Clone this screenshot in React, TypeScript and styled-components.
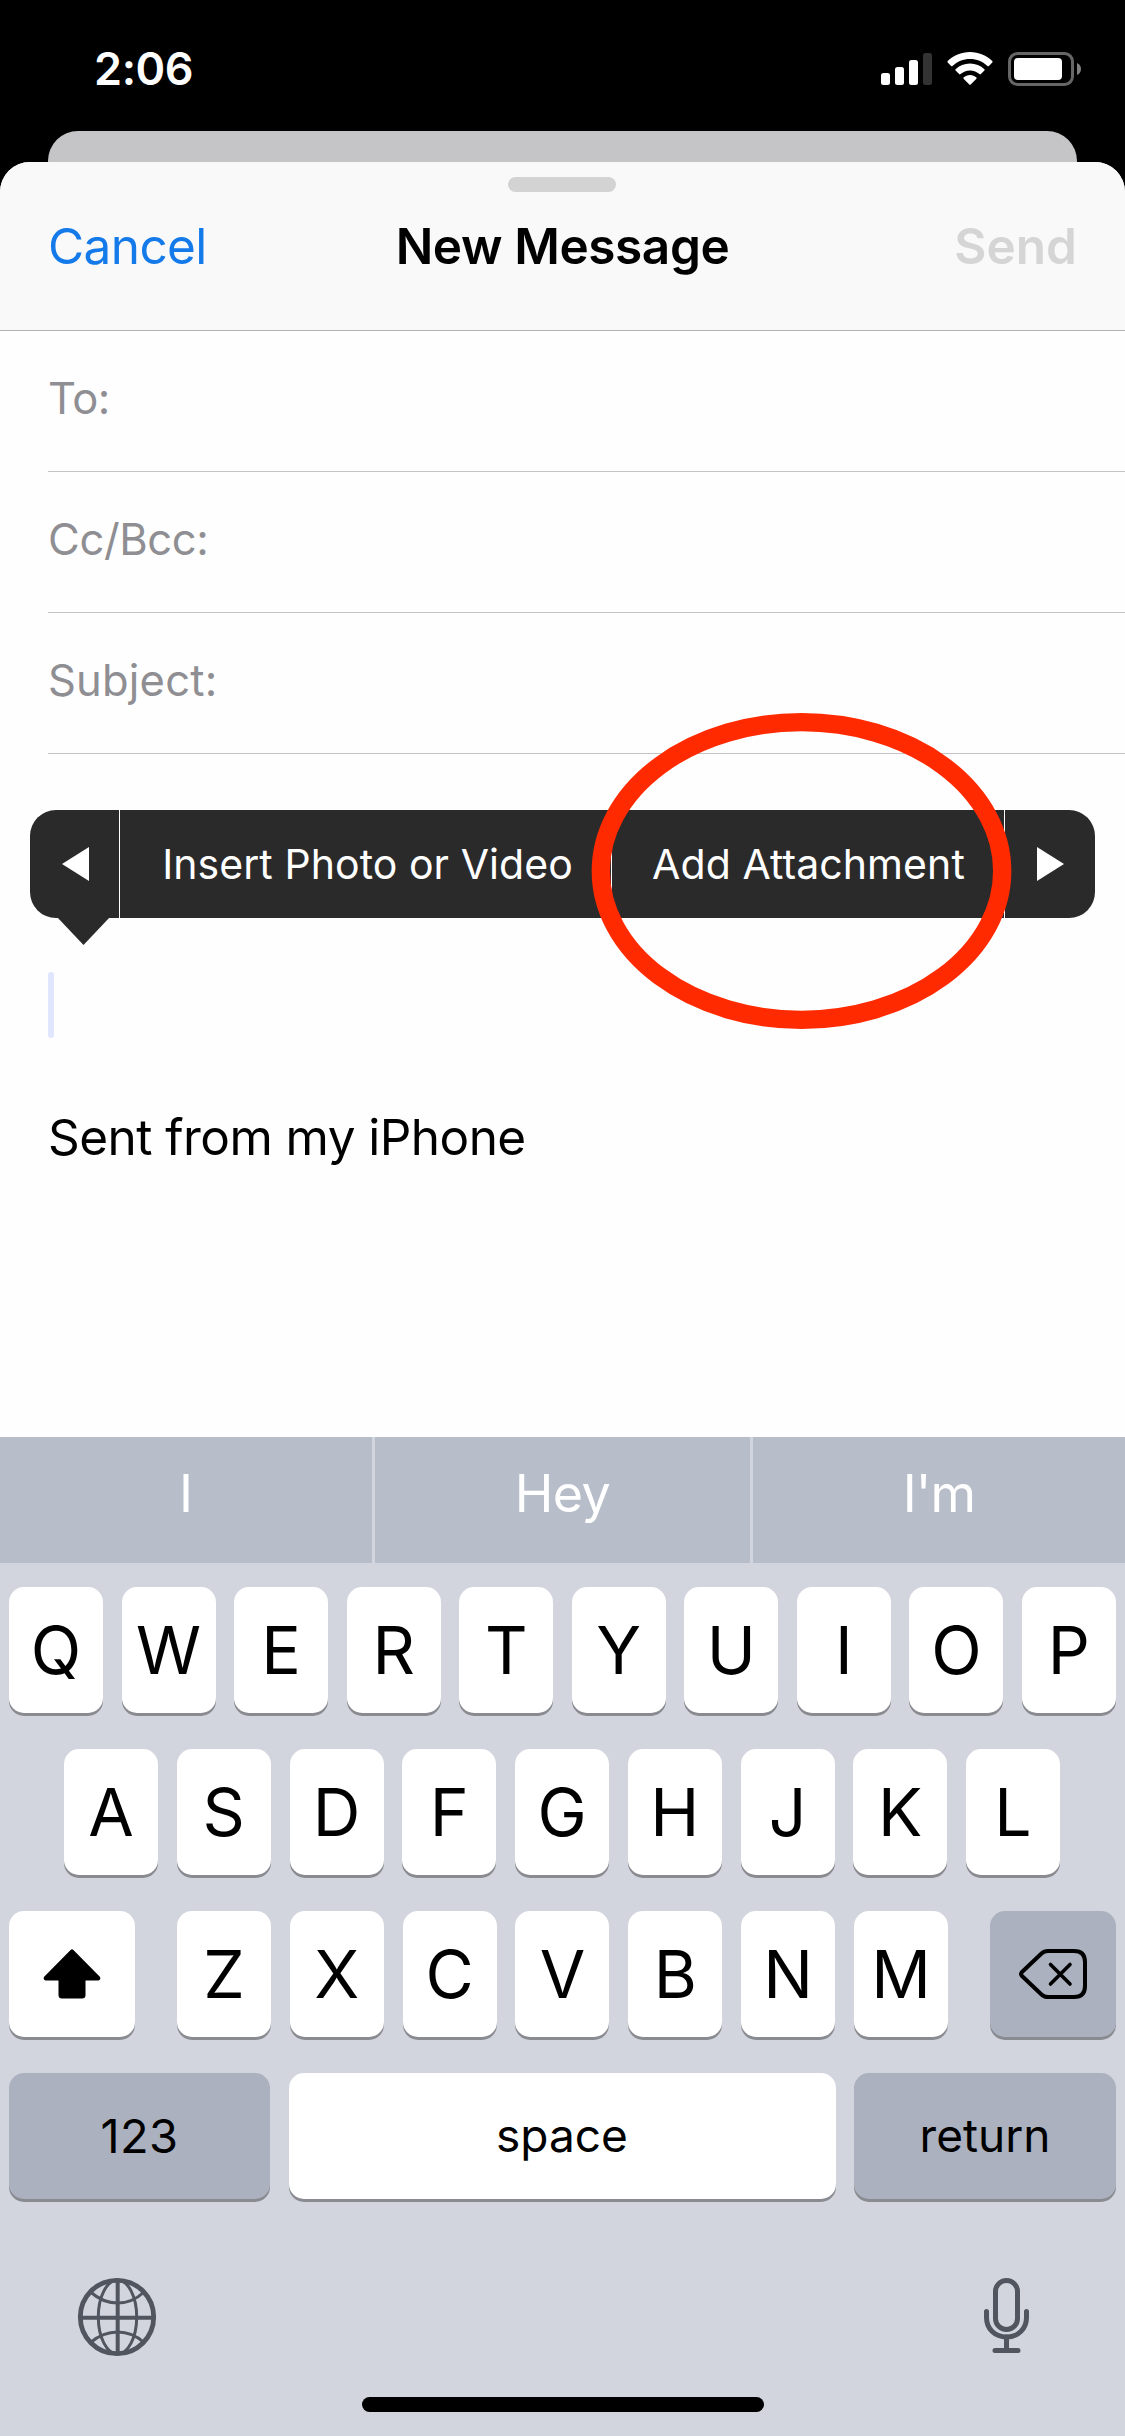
import React from "react";
import styled, { createGlobalStyle } from "styled-components";

const GlobalStyle = createGlobalStyle`
  * { box-sizing: border-box; }
  html, body { margin: 0; padding: 0; background: #000; }
  body { font-family: Inter, "Liberation Sans", sans-serif; }
`;

const Screen = styled.div`
  width: 1125px;
  height: 2436px;
  display: flex;
  flex-direction: column;
  overflow: hidden;
  background: #000;
`;

/* ---------- text ---------- */

const Label = styled.span<{ $size: number; $spacing?: number; $weight?: number; $color?: string }>`
  font-size: ${(p) => p.$size}px;
  letter-spacing: ${(p) => p.$spacing ?? 0}px;
  font-weight: ${(p) => p.$weight ?? 400};
  color: ${(p) => p.$color ?? "#000"};
  line-height: 60px;
  white-space: nowrap;
`;

/* ---------- status bar ---------- */

const StatusBar = styled.header`
  height: 131px;
  flex: none;
  display: flex;
  align-items: flex-start;
  justify-content: space-between;
  padding: 39px 43px 0 94px;
`;

const StatusIcons = styled.div`
  display: flex;
  align-items: flex-start;
  gap: 15px;
  padding-top: 13px;
`;

/* ---------- sheets ---------- */

const BackSheet = styled.div`
  height: 31px;
  flex: none;
  margin: 0 48px;
  border-radius: 30px 30px 0 0;
  background: #c5c5c7;
`;

const Sheet = styled.main`
  height: 1275px;
  flex: none;
  display: flex;
  flex-direction: column;
  border-radius: 30px 30px 0 0;
  background: #fefefe;
`;

const SheetHeader = styled.div`
  height: 169px;
  flex: none;
  display: flex;
  flex-direction: column;
  align-items: center;
  padding-top: 15px;
  border-radius: 30px 30px 0 0;
  border-bottom: 1px solid #b2b2b4;
  background: #f9f9f9;
`;

const Grabber = styled.div`
  width: 108px;
  height: 15px;
  margin-right: 1px;
  border-radius: 8px;
  background: #d3d3d3;
`;

const NavRow = styled.div`
  width: 100%;
  height: 108px;
  display: grid;
  grid-template-columns: 1fr auto 1fr;
  align-items: center;
  padding: 0 48px;
`;

const NavEnd = styled.div`
  display: flex;
  justify-content: flex-end;
`;

const Field = styled.div`
  height: 141px;
  flex: none;
  display: flex;
  align-items: center;
  margin-left: 48px;
  padding-bottom: 6px;
  border-bottom: 1px solid #c4c4c6;
`;

const Body = styled.section`
  flex: 1;
  display: flex;
  flex-direction: column;
  padding: 56px 30px 0;
`;

/* ---------- edit menu ---------- */

const EditMenu = styled.div`
  position: relative;
  height: 108px;
  display: grid;
  grid-template-columns: 89px 1px 491px 1px 392px 1px 90px;
  border-radius: 26px;
  background: #2a2a2a;
`;

const MenuItem = styled.div<{ $indent?: number }>`
  display: flex;
  align-items: center;
  justify-content: center;
  padding-left: ${(p) => p.$indent ?? 0}px;
`;

const MenuDivider = styled.div`
  background: #fff;
`;

const MenuTail = styled.svg`
  position: absolute;
  left: 27px;
  top: 107px;
`;

const Highlight = styled.svg`
  position: absolute;
  left: 560px;
  top: -98px;
`;

const Caret = styled.div`
  width: 6px;
  height: 66px;
  margin: 54px 0 0 18px;
  border-radius: 3px;
  background: #e0e6fd;
`;

const Signature = styled.div`
  height: 60px;
  margin: 69px 0 0 18px;
  display: flex;
`;

/* ---------- keyboard ---------- */

const Keyboard = styled.section`
  flex: 1;
  display: flex;
  flex-direction: column;
  background: #d2d5de;
`;

const Suggestions = styled.div`
  height: 126px;
  flex: none;
  display: grid;
  grid-template-columns: 372px 375px 372px;
  gap: 3px;
`;

const Suggestion = styled.div`
  display: flex;
  align-items: center;
  justify-content: center;
  padding-bottom: 12px;
  background: #b8bec9;
`;

const KeyRows = styled.div`
  display: flex;
  flex-direction: column;
  gap: 36px;
  padding-top: 24px;
`;

const KeyRow = styled.div<{ $inset?: string }>`
  height: 126px;
  flex: none;
  display: flex;
  justify-content: space-between;
  padding: ${(p) => p.$inset ?? "0 9px"};
`;

const LetterGroup = styled.div`
  width: 771px;
  display: flex;
  justify-content: space-between;
`;

const Key = styled.div<{ $width?: number; $dark?: boolean; $lift?: number }>`
  width: ${(p) => p.$width ?? 94}px;
  height: 126px;
  flex: none;
  display: flex;
  align-items: center;
  justify-content: center;
  padding-bottom: ${(p) => p.$lift ?? 0}px;
  border-radius: 15px;
  background: ${(p) => (p.$dark ? "#abb1be" : "#fff")};
  box-shadow: 0 3px 0 #898b90;
`;

const KeyboardFooter = styled.div`
  height: 84px;
  margin-top: 77px;
  display: flex;
  justify-content: space-between;
  padding: 0 95px 0 76px;
`;

const HomeIndicator = styled.div`
  width: 402px;
  height: 15px;
  margin: 37px 0 0 362px;
  border-radius: 8px;
  background: #000;
`;

/* ---------- icons ---------- */

const SignalIcon = () => (
  <svg width="51" height="34" viewBox="0 0 51 34" fill="#fff">
    <rect x="0" y="21" width="9" height="12" rx="2.5" />
    <rect x="14" y="15" width="9" height="18" rx="2.5" />
    <rect x="28" y="8" width="9" height="25" rx="2.5" />
    <rect x="42" y="1" width="9" height="32" rx="2.5" fill="#333" />
  </svg>
);

const WifiIcon = () => (
  <svg width="46" height="34" viewBox="0 0 46 34" fill="#fff">
    <path d="M23 0C31.800 0 39.600 3.500 45.300 9.100Q45.900 9.800 45.300 10.500L41.900 14Q41.200 14.600 40.500 14C35.800 9.500 29.700 7 23 7S10.200 9.500 5.500 14Q4.800 14.600 4.100 14L.7 10.500Q.1 9.800.7 9.100C6.400 3.500 14.200 0 23 0Z" />
    <path d="M23 11.500C28.600 11.500 33.700 13.700 37.400 17.300Q38 18 37.400 18.600L33.900 22.100Q33.200 22.700 32.500 22.100C30 19.800 26.700 18.400 23 18.400S16 19.800 13.500 22.100Q12.800 22.700 12.100 22.100L8.600 18.600Q8 18 8.600 17.300C12.300 13.700 17.400 11.500 23 11.500Z" />
    <path d="M23 23C25.400 23 27.700 23.900 29.400 25.500Q30 26.100 29.400 26.700L23.700 32.600Q23 33.300 22.300 32.600L16.600 26.700Q16 26.100 16.600 25.500C18.300 23.900 20.600 23 23 23Z" />
  </svg>
);

const BatteryIcon = () => (
  <svg width="74" height="34" viewBox="0 0 74 34">
    <rect x="1.500" y="1.500" width="63" height="31" rx="8" fill="none" stroke="#666" strokeWidth="3" />
    <rect x="6" y="6" width="48" height="22" rx="4" fill="#fff" />
    <path d="M69 11C71.500 12 73 14.300 73 17S71.500 22 69 23Z" fill="#808080" />
  </svg>
);

const MenuArrow = ({ flip }: { flip?: boolean }) => (
  <svg width="27" height="34" viewBox="0 0 27 34" fill="#fff">
    <path d={flip ? "M0 0L27 17L0 34Z" : "M27 0L0 17L27 34Z"} />
  </svg>
);

const ShiftIcon = () => (
  <svg width="58" height="50" viewBox="0 0 58 50">
    <path
      d="M27.600 1Q29 -.4 30.400 1L56.600 27.600Q57.600 28.800 57.200 30T55.500 31.500H42.500V46Q42.500 49.500 39 49.500H19Q15.500 49.500 15.500 46V31.500H2.500Q1.200 31.300.8 30T1.400 27.600Z"
      fill="#000"
    />
  </svg>
);

const BackspaceIcon = () => (
  <svg width="70" height="52" viewBox="0 0 70 52" fill="none" stroke="#000" strokeWidth="4">
    <path d="M30 3H56Q67 3 67 14V38Q67 49 56 49H30Q26 49 23.500 46.500L4 28Q2 26 4 24L23.500 5.500Q26 3 30 3Z" strokeLinejoin="round" />
    <path d="M32.500 16.500L52 36M52 16.500L32.500 36" strokeWidth="3.600" strokeLinecap="round" />
  </svg>
);

const GlobeIcon = () => (
  <svg width="82" height="82" viewBox="-41 -41 82 82" fill="none" stroke="#50555f" strokeWidth="3">
    <circle r="36.700" strokeWidth="4.800" />
    <ellipse cx="0.500" rx="19.200" ry="37" />
    <path d="M.7 -37V37M-37 .7H37" strokeWidth="4" />
    <path d="M-26.500 -25Q-14 -14 .7 -14T27 -25M-26.500 25.500Q-14 15 .7 15T27 25.500" />
  </svg>
);

const MicIcon = () => (
  <svg width="47" height="78" viewBox="0 0 47 78" fill="none" stroke="#50555f" strokeWidth="5" strokeLinecap="round">
    <rect x="12.500" y="4.500" width="22" height="49" rx="11" />
    <path d="M3.500 35.500V41.500C3.500 53 12 61 23.500 61S43.500 53 43.500 41.500V35.500" />
    <path d="M23.500 61V74.500M12 74.500H35" />
  </svg>
);

/* ---------- screen ---------- */

const letters = (row: string) =>
  row.split("").map((c) => (
    <Key key={c}>
      <Label $size={66}>{c}</Label>
    </Key>
  ));

const fields = [
  { name: "To:", spacing: -0.5 },
  { name: "Cc/Bcc:", spacing: -0.35 },
  { name: "Subject:", spacing: 0.2 },
];

export default function App() {
  return (
    <Screen>
      <GlobalStyle />
      <StatusBar>
        <Label $size={45} $weight={600} $spacing={-0.4} $color="#fff">2:06</Label>
        <StatusIcons>
          <SignalIcon />
          <WifiIcon />
          <BatteryIcon />
        </StatusIcons>
      </StatusBar>
      <BackSheet />
      <Sheet>
        <SheetHeader>
          <Grabber />
          <NavRow>
            <Label $size={49.500} $spacing={-0.6} $color="#147aea">Cancel</Label>
            <Label $size={49.500} $spacing={-0.4} $weight={600}>New Message</Label>
            <NavEnd>
              <Label $size={49.500} $weight={600} $color="#d5d5d5">Send</Label>
            </NavEnd>
          </NavRow>
        </SheetHeader>
        {fields.map((f) => (
          <Field key={f.name}>
            <Label $size={43.500} $spacing={f.spacing} $color="#8e8e93">{f.name}</Label>
          </Field>
        ))}
        <Body>
          <EditMenu>
            <MenuItem $indent={2}><MenuArrow /></MenuItem>
            <MenuDivider />
            <MenuItem $indent={4}><Label $size={41} $spacing={0.06} $color="#fff">Insert Photo or Video</Label></MenuItem>
            <MenuDivider />
            <MenuItem $indent={1}><Label $size={41} $spacing={0.08} $color="#fff">Add Attachment</Label></MenuItem>
            <MenuDivider />
            <MenuItem><MenuArrow flip /></MenuItem>
            <MenuTail width="53" height="28" viewBox="0 0 53 28" fill="#2a2a2a">
              <path d="M0 0H53L26.500 28Z" />
            </MenuTail>
            <Highlight width="423" height="318" viewBox="0 0 423 318" fill="none" stroke="#ff2a00">
              <ellipse cx="211.500" cy="159" rx="200.700" ry="148.800" strokeWidth="18.300" />
            </Highlight>
          </EditMenu>
          <Caret />
          <Signature><Label $size={49.500} $spacing={-0.55}>Sent from my iPhone</Label></Signature>
        </Body>
      </Sheet>
      <Keyboard>
        <Suggestions>
          <Suggestion><Label $size={52} $color="#fff">I</Label></Suggestion>
          <Suggestion><Label $size={52} $spacing={-0.6} $color="#fff">Hey</Label></Suggestion>
          <Suggestion><Label $size={52} $spacing={-0.8} $color="#fff">I'm</Label></Suggestion>
        </Suggestions>
        <KeyRows>
          <KeyRow>{letters("QWERTYUIOP")}</KeyRow>
          <KeyRow $inset="0 65px 0 64px">{letters("ASDFGHJKL")}</KeyRow>
          <KeyRow>
            <Key $width={126}><ShiftIcon /></Key>
            <LetterGroup>{letters("ZXCVBNM")}</LetterGroup>
            <Key $width={126} $dark><BackspaceIcon /></Key>
          </KeyRow>
          <KeyRow>
            <Key $width={261} $dark><Label $size={47} $spacing={0.4}>123</Label></Key>
            <Key $width={547} $lift={3}><Label $size={46}>space</Label></Key>
            <Key $width={262} $dark $lift={3}><Label $size={46}>return</Label></Key>
          </KeyRow>
        </KeyRows>
        <KeyboardFooter>
          <GlobeIcon />
          <MicIcon />
        </KeyboardFooter>
        <HomeIndicator />
      </Keyboard>
    </Screen>
  );
}
